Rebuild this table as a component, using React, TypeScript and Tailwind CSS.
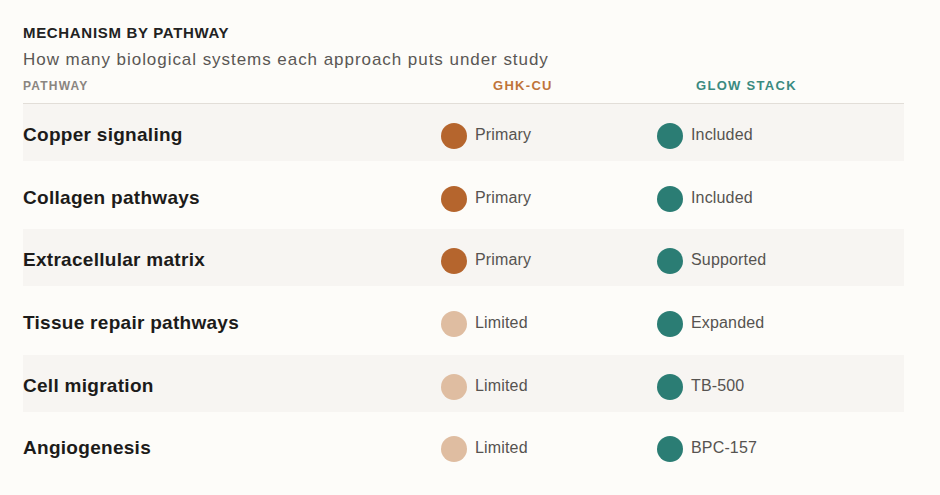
import React from 'react'

type Level = 'primary' | 'limited' | 'stack'

interface Row {
  label: string
  ghk: { level: Level; text: string }
  glow: { level: Level; text: string }
}

const rows: Row[] = [
  { label: 'Copper signaling', ghk: { level: 'primary', text: 'Primary' }, glow: { level: 'stack', text: 'Included' } },
  { label: 'Collagen pathways', ghk: { level: 'primary', text: 'Primary' }, glow: { level: 'stack', text: 'Included' } },
  { label: 'Extracellular matrix', ghk: { level: 'primary', text: 'Primary' }, glow: { level: 'stack', text: 'Supported' } },
  { label: 'Tissue repair pathways', ghk: { level: 'limited', text: 'Limited' }, glow: { level: 'stack', text: 'Expanded' } },
  { label: 'Cell migration', ghk: { level: 'limited', text: 'Limited' }, glow: { level: 'stack', text: 'TB-500' } },
  { label: 'Angiogenesis', ghk: { level: 'limited', text: 'Limited' }, glow: { level: 'stack', text: 'BPC-157' } },
]

const dotColor: Record<Level, string> = {
  primary: 'bg-[#b5652d]',
  limited: 'bg-[#dfbda1]',
  stack: 'bg-[#2b7d74]',
}

function Cell({ level, text, className }: { level: Level; text: string; className?: string }) {
  return (
    <div className={`flex items-center gap-[8px] ${className ?? ''}`}>
      <span className={`w-[26px] h-[26px] rounded-full shrink-0 translate-y-[1px] ${dotColor[level]}`} />
      <span className="text-[16px] leading-[20px] tracking-[0.01em] text-[#565350]">{text}</span>
    </div>
  )
}

export default function App() {
  return (
    <div
      className="w-[940px] h-[495px] bg-[#fdfcf9] overflow-hidden"
      style={{ fontFamily: '"Liberation Sans", Arial, sans-serif' }}
    >
      <div className="ml-[23px] w-[881px] pt-[24px]">
        <h2 className="text-[15px] leading-[18px] font-bold tracking-[0.045em] text-[#222]">MECHANISM BY PATHWAY</h2>
        <p className="mt-[8px] text-[17px] leading-[20px] tracking-[0.056em] text-[#5a5754]">
          How many biological systems each approach puts under study
        </p>

        {/* Column headers */}
        <div className="mt-[9px] flex items-baseline pb-[10px] border-b border-[#e2ded8]">
          <div className="w-[418px] text-[12px] leading-[14px] font-bold tracking-[0.1em] text-[#8a8580]">PATHWAY</div>
          <div className="w-[216px] pl-[52px] text-[13px] leading-[14px] font-bold tracking-[0.1em] text-[#bf7439]">GHK-CU</div>
          <div className="flex-1 pl-[39px] text-[13px] leading-[14px] font-bold tracking-[0.1em] text-[#3a8a80]">GLOW STACK</div>
        </div>

        {/* Rows */}
        <div className="flex flex-col gap-[5.7px]">
          {rows.map((r, i) => (
            <div
              key={r.label}
              className={`h-[57px] pt-[5px] flex items-center ${i % 2 === 0 ? 'bg-[#f7f5f2]' : ''}`}
            >
              <div className="w-[418px] text-[19px] leading-[24px] font-bold tracking-[0.015em] text-[#1c1b1a]">{r.label}</div>
              <Cell className="w-[216px]" level={r.ghk.level} text={r.ghk.text} />
              <Cell className="flex-1" level={r.glow.level} text={r.glow.text} />
            </div>
          ))}
        </div>
      </div>
    </div>
  )
}
